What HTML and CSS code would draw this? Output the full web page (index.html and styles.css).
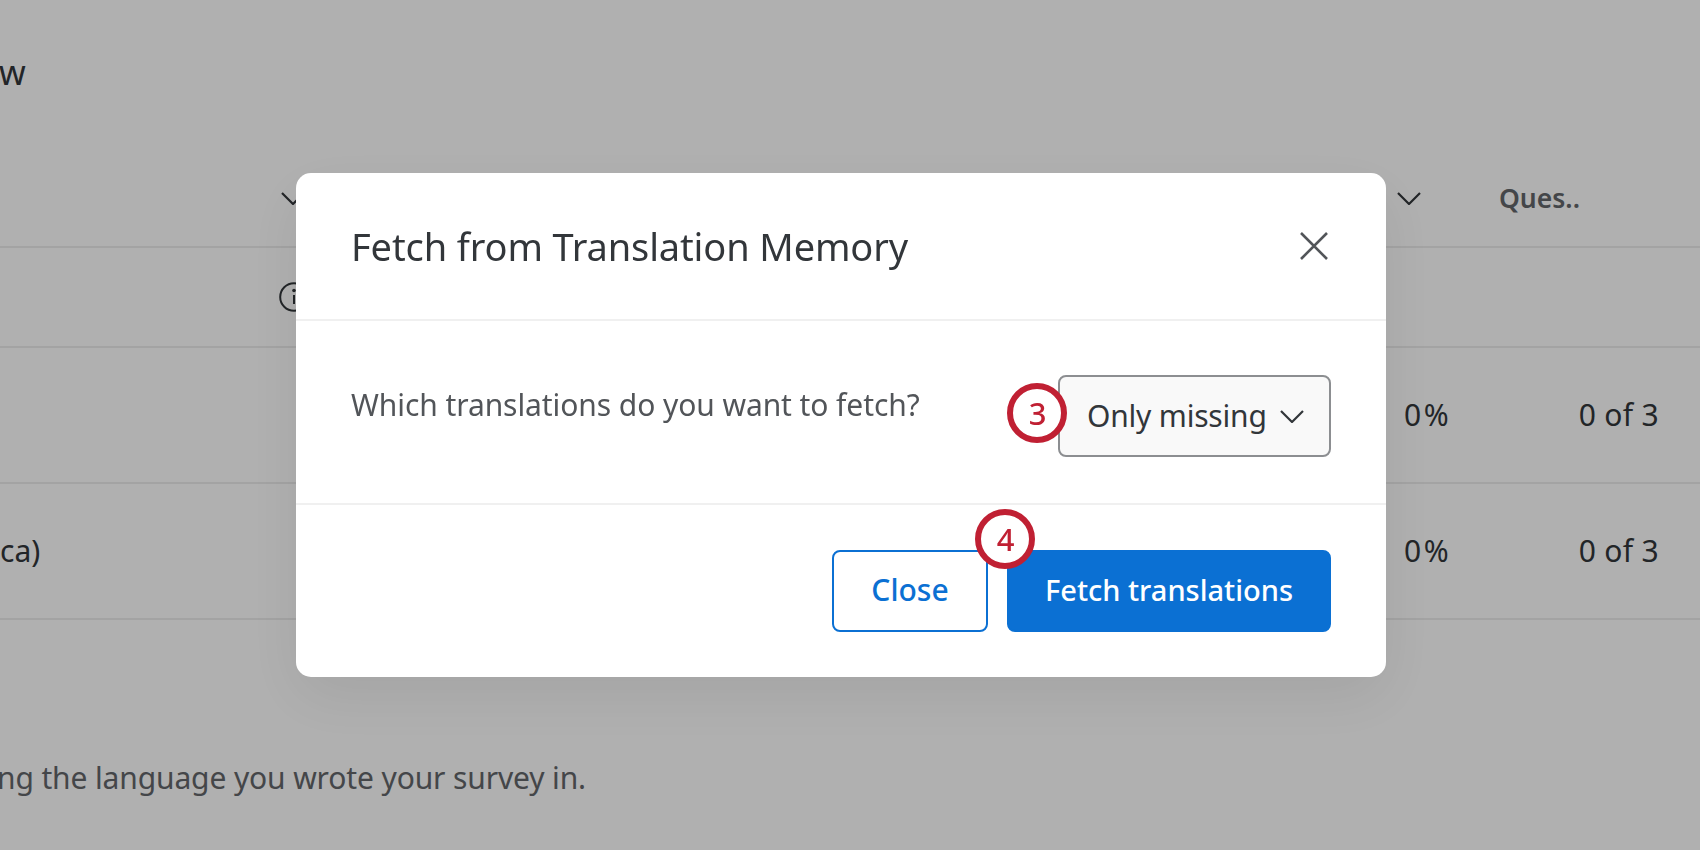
FILE: index.html
```html
<!DOCTYPE html>
<html>
<head>
	<meta charset="utf-8">
	<title>Fetch from Translation Memory</title>
	<link rel="stylesheet" href="styles.css">
</head>
<body>
	<div class="page">
		<h1 class="page-title">w</h1>
		<div class="table">
			<div class="row row-head">
				<div class="cell-main">
					<svg class="chevron" viewBox="0 0 24 13"><path d="M1 1l11 11L23 1"/></svg>
				</div>
				<div class="cell-pct">
					<svg class="chevron" viewBox="0 0 24 13"><path d="M1 1l11 11L23 1"/></svg>
				</div>
				<div class="cell-count head-label">Ques..</div>
			</div>
			<div class="row row-source">
				<div class="cell-main">
					<svg class="info" viewBox="0 0 30 30">
						<circle cx="15" cy="15" r="13.8"/>
						<path d="M15 13v9"/>
						<circle class="info-dot" cx="15" cy="8.5" r="1.8"/>
					</svg>
				</div>
			</div>
			<div class="row row-lang">
				<div class="cell-main"></div>
				<div class="cell-pct">0%</div>
				<div class="cell-count">0 of 3</div>
			</div>
			<div class="row row-lang">
				<div class="cell-main">ca)</div>
				<div class="cell-pct">0%</div>
				<div class="cell-count">0 of 3</div>
			</div>
		</div>
		<p class="page-note">ng the language you wrote your survey in.</p>
	</div>

	<div class="overlay">
		<div class="modal">
			<div class="modal-header">
				<h2 class="modal-title">Fetch from Translation Memory</h2>
				<svg class="modal-close" viewBox="0 0 28 28"><path d="M1 1l26 26M27 1L1 27"/></svg>
			</div>
			<div class="modal-body">
				<p class="modal-question">Which translations do you want to fetch?</p>
				<div class="dropdown">
					<span class="badge badge-dropdown">3</span>
					<span class="dropdown-label">Only missing</span>
					<svg class="chevron" viewBox="0 0 24 13"><path d="M1 1l11 11L23 1"/></svg>
				</div>
			</div>
			<div class="modal-footer">
				<button class="btn btn-outline">Close</button>
				<button class="btn btn-primary">
					<span class="badge badge-fetch">4</span>
					Fetch translations
				</button>
			</div>
		</div>
	</div>
</body>
</html>
```

FILE: styles.css
```css
* {
	margin: 0;
	padding: 0;
	box-sizing: border-box;
}

body {
	width: 1700px;
	height: 850px;
	overflow: hidden;
	background: #fff;
	font-family: "Noto Sans", sans-serif;
	font-size: 30px;
	color: #32363a;
}

.page {
	height: 100%;
}

.page-title {
	height: 138px;
	padding-top: 52px;
	font-size: 34px;
	line-height: 40px;
	font-weight: 400;
	margin-left: -1px;
}

.row {
	display: grid;
	grid-template-columns: 1397px 102px 201px;
	align-items: center;
	border-bottom: 2px solid #ececec;
}

.row-head {
	height: 110px;
	padding-top: 12px;
}

.row-source {
	height: 100px;
}

.row-lang {
	height: 136px;
	padding-bottom: 2px;
}

.row-lang .cell-pct {
	padding-left: 7px;
	letter-spacing: 2.5px;
}

.cell-count {
	padding-right: 41px;
	text-align: right;
	letter-spacing: 0.3px;
}

.head-label {
	text-align: left;
	font-size: 26.5px;
	font-weight: 600;
	color: #63666a;
	letter-spacing: 0;
}

.chevron {
	display: block;
	width: 24px;
	height: 13px;
	fill: none;
	stroke: #32363a;
	stroke-width: 2.2;
}

.row-head .cell-main .chevron {
	margin-left: 281px;
}

.info {
	display: block;
	width: 30px;
	height: 30px;
	margin-left: 279px;
	fill: none;
	stroke: #32363a;
	stroke-width: 2;
}

.info-dot {
	fill: #32363a;
	stroke: none;
}

.page-note {
	margin-top: 138px;
	margin-left: -3px;
	line-height: 40px;
	letter-spacing: -0.13px;
	color: #63666a;
}

.overlay {
	position: fixed;
	top: 0;
	left: 0;
	width: 100%;
	height: 100%;
	padding-left: 296px;
	display: flex;
	align-items: center;
	background: rgba(0, 0, 0, 0.31);
}

.modal {
	width: 1090px;
	height: 504px;
	background: #fff;
	border-radius: 15px;
	box-shadow: 0 20px 60px rgba(0, 0, 0, 0.08);
}

.modal-header {
	height: 148px;
	padding: 0 58px 0 55px;
	display: flex;
	align-items: center;
	justify-content: space-between;
	border-bottom: 2px solid #f0f0f0;
}

.modal-title {
	font-size: 38px;
	font-weight: 400;
	line-height: 48px;
	letter-spacing: -0.12px;
}

.modal-close {
	width: 28px;
	height: 28px;
	fill: none;
	stroke: #525559;
	stroke-width: 2.6;
}

.modal-body {
	height: 184px;
	padding: 54px 55px 0 55px;
	display: flex;
	justify-content: space-between;
	align-items: flex-start;
	border-bottom: 2px solid #f0f0f0;
}

.modal-question {
	padding-top: 10px;
	line-height: 40px;
	letter-spacing: -0.08px;
	color: #525559;
}

.dropdown {
	position: relative;
	width: 273px;
	height: 82px;
	padding: 0 0 2px 27px;
	display: flex;
	align-items: center;
	gap: 13px;
	background: #f9f9f9;
	border: 2px solid #8c8e91;
	border-radius: 8px;
}

.dropdown-label {
	letter-spacing: -0.2px;
}

.dropdown .chevron {
	margin-top: 2px;
}

.modal-footer {
	padding: 45px 55px 0 0;
	display: flex;
	justify-content: flex-end;
	gap: 19px;
}

.btn {
	position: relative;
	height: 82px;
	padding-bottom: 4px;
	font-family: inherit;
	font-size: 29px;
	font-weight: 500;
	border-radius: 8px;
	border: 2px solid #0b70d3;
}

.btn-outline {
	width: 156px;
	font-size: 30px;
	background: #fff;
	color: #0b70d3;
}

.btn-primary {
	width: 324px;
	background: #0b70d3;
	color: #fff;
}

.badge {
	position: absolute;
	width: 60px;
	height: 60px;
	padding-left: 1px;
	display: flex;
	align-items: center;
	justify-content: center;
	background: #fff;
	border: 6px solid #c02033;
	border-radius: 50%;
	color: #c02033;
	font-size: 31px;
	font-weight: 500;
}

.badge-dropdown {
	left: -53px;
	top: 6px;
}

.badge-fetch {
	left: -34px;
	top: -43px;
}
```
